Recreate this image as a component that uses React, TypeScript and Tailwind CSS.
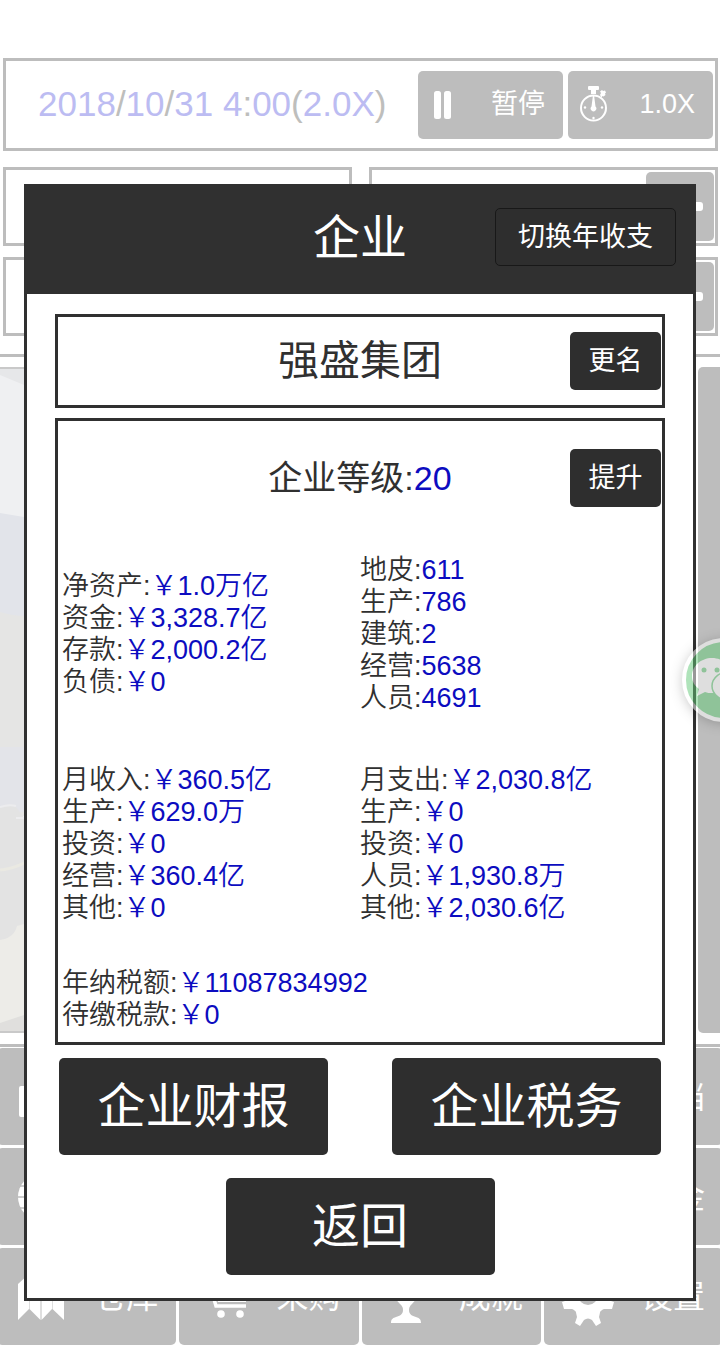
import type { ReactNode } from 'react';

interface StatLine {
  label: string;
  value: string;
}

const ASSETS: StatLine[] = [
  { label: '净资产', value: '¥1.0万亿' },
  { label: '资金', value: '¥3,328.7亿' },
  { label: '存款', value: '¥2,000.2亿' },
  { label: '负债', value: '¥0' },
];

const HOLDINGS: StatLine[] = [
  { label: '地皮', value: '611' },
  { label: '生产', value: '786' },
  { label: '建筑', value: '2' },
  { label: '经营', value: '5638' },
  { label: '人员', value: '4691' },
];

const INCOME: StatLine[] = [
  { label: '月收入', value: '¥360.5亿' },
  { label: '生产', value: '¥629.0万' },
  { label: '投资', value: '¥0' },
  { label: '经营', value: '¥360.4亿' },
  { label: '其他', value: '¥0' },
];

const EXPENSES: StatLine[] = [
  { label: '月支出', value: '¥2,030.8亿' },
  { label: '生产', value: '¥0' },
  { label: '投资', value: '¥0' },
  { label: '人员', value: '¥1,930.8万' },
  { label: '其他', value: '¥2,030.6亿' },
];

const TAXES: StatLine[] = [
  { label: '年纳税额', value: '¥11087834992' },
  { label: '待缴税款', value: '¥0' },
];

function StatList({ lines }: { lines: StatLine[] }) {
  return (
    <ul className="text-[27px] leading-8 font-[350] whitespace-nowrap">
      {lines.map((line) => (
        <li key={line.label}>
          {line.label}:<span className="text-[#0c0cc0]">{line.value.replace('¥', '￥')}</span>
        </li>
      ))}
    </ul>
  );
}

function SmallButton({ children }: { children: ReactNode }) {
  return (
    <button className="justify-self-end w-[91px] h-[58px] rounded-[5px] bg-[#2e2e2e] text-white text-[27px] leading-8">
      {children}
    </button>
  );
}

function LargeButton({ children }: { children: ReactNode }) {
  return (
    <button className="w-[269px] h-[97px] rounded-[5px] bg-[#2e2e2e] text-white text-5xl">
      {children}
    </button>
  );
}

function PauseIcon() {
  return (
    <svg viewBox="0 0 27 37" className="w-[27px] h-[37px]" fill="currentColor">
      <rect x="4" y="5" width="7" height="28" rx="2.500" />
      <rect x="14" y="5" width="7" height="28" rx="2.500" />
    </svg>
  );
}

function StopwatchIcon() {
  return (
    <svg viewBox="0 0 27 37" className="w-[27px] h-[37px]" fill="currentColor">
      <rect x="8" y="0" width="11" height="4" rx="1" />
      <rect x="11" y="3" width="5" height="5" />
      <path d="M20 9l1-2-1-1.500 2-1.500 1 1 2-.5 1 2-1 1 .5 1.500-2 1.500-1-.5-1 1.500z" />
      <circle cx="13.500" cy="22" r="12.500" fill="none" stroke="currentColor" strokeWidth="2" />
      <path d="M13 9h1l1.500 11.500a2.800 2.800 0 1 1-4 0z" />
      <circle cx="13.500" cy="32" r="1.200" />
      <circle cx="5" cy="21.500" r="1.200" />
      <circle cx="22" cy="21.500" r="1.200" />
    </svg>
  );
}

function PlusIcon() {
  return (
    <svg viewBox="0 0 46 46" className="w-[46px] h-[46px]" fill="currentColor">
      <rect x="0" y="18" width="46" height="9" rx="3" />
      <rect x="19" y="0" width="9" height="46" rx="3" />
    </svg>
  );
}

function BuildingIcon() {
  return (
    <svg viewBox="0 0 46 46" className="w-[46px] h-[46px] shrink-0" fill="currentColor">
      <rect x="1" y="12" width="44" height="31" rx="2" />
    </svg>
  );
}

function BallIcon() {
  return (
    <svg viewBox="0 0 46 46" className="w-[46px] h-[46px] shrink-0">
      <ellipse cx="22" cy="23" rx="22" ry="23" fill="currentColor" />
      <path d="M0 23h46M2 12h42M2 34h42M23 0v46" fill="none" stroke="#bdbdbd" strokeWidth="1.500" />
    </svg>
  );
}

function MapIcon() {
  return (
    <svg viewBox="0 0 46 46" className="w-[46px] h-[46px] shrink-0" fill="currentColor">
      <path d="M0 10L11 0v35L0 46z" />
      <path d="M11.500 0L22.500 10v36L11.500 35z" />
      <path d="M23.500 10L34 0v35L23.500 46z" />
      <path d="M34.500 0L46 10v36L34.500 35z" />
    </svg>
  );
}

function CartIcon() {
  return (
    <svg viewBox="0 0 46 46" className="w-[46px] h-[46px] shrink-0">
      <path d="M1 8h8l7 24h31" fill="none" stroke="currentColor" strokeWidth="3.500" />
      <path d="M13 11h33v17H18z" fill="currentColor" />
      <circle cx="21" cy="40" r="3.800" fill="currentColor" />
      <circle cx="40" cy="40" r="3.800" fill="currentColor" />
    </svg>
  );
}

function TrophyIcon() {
  return (
    <svg viewBox="0 0 46 54" className="w-[46px] h-[54px] shrink-0" fill="currentColor">
      <path d="M9 2h28v14c0 8-3 13-8 18-2 2-3 3-3 6 0 4 3 6 7 7 3 1 5 2 5 6H8c0-4 2-5 5-6 4-1 7-3 7-7 0-3-1-4-3-6-5-5-8-10-8-18z" />
    </svg>
  );
}

function GearIcon() {
  return (
    <svg viewBox="0 0 52 58" className="w-[52px] h-[58px] shrink-0">
      <g fill="currentColor">
        <circle cx="26" cy="29" r="19" />
        <path d="M18 12l-4-9 6-3 5 6h2l5-6 6 3-4 9zM10 23l-9-3 2-7 8 1 5-5 4 6zM42 23l9-3-2-7-8 1-5-5-4 6zM12 30L0 34l2 7h8l7 3zM40 30l12 4-2 7h-8l-7 3zM13 40l2 9-2 6 5 3 4-6q4-3 8 0l4 6 5-3-2-6 2-9z" />
      </g>
      <circle cx="26" cy="27" r="10" fill="#bdbdbd" />
    </svg>
  );
}

interface MenuItem {
  icon?: ReactNode;
  text?: string;
}

// Cells covered by the dialog stay blank
const MENU: MenuItem[] = [
  { icon: <BuildingIcon /> },
  {},
  {},
  { text: '存档' },
  { icon: <BallIcon /> },
  {},
  {},
  { text: '基金' },
  { icon: <MapIcon />, text: '仓库' },
  { icon: <CartIcon />, text: '采购' },
  { icon: <TrophyIcon />, text: '成就' },
  { icon: <GearIcon />, text: '设置' },
];

function ResourceBox({ hasButton = false }: { hasButton?: boolean }) {
  return (
    <div className="h-[79px] pr-px border-3 border-[#bdbdbd] flex items-center justify-end">
      {hasButton && (
        <button aria-label="增加" className="w-[68px] h-[69px] rounded-[5px] bg-[#bdbdbd] text-white flex items-center justify-center">
          <PlusIcon />
        </button>
      )}
    </div>
  );
}

function Landscape() {
  return (
    <svg viewBox="0 0 24 666" preserveAspectRatio="none" className="w-6 h-full">
      <rect width="24" height="666" fill="#eff0f2" />
      <path d="M0 0h24v18L0 8z" fill="#e6e7e9" />
      <path d="M0 146l24 4v110H0z" fill="#e2e4ea" />
      <path d="M0 245q14 4 24 4v200H0z" fill="#e5e5e4" />
      <path d="M0 380h24v65H0z" fill="#e3e4e9" />
      <path d="M0 441q10-4 16-1l8 11v130H0z" fill="#e3e3e3" />
      <path d="M0 440q9-3 16-1M16 451h8" fill="none" stroke="#ececee" strokeWidth="2" />
      <path d="M0 503q12-1 24-7" fill="none" stroke="#eae9e2" strokeWidth="3" />
      <path d="M0 573q14-2 17-14l7-2v109H0z" fill="#edece8" />
      <path d="M0 656l24-8v18H0z" fill="#e0dfdd" />
      <path d="M0 1h24M0 665h24" stroke="#c9c9c9" strokeWidth="2" />
    </svg>
  );
}

function GameBackground() {
  return (
    <div className="pt-[58px] pb-[7px]">
      <div className="mx-[3px] mr-[2px] h-[93px] pl-8 pr-[2px] border-3 border-[#bdbdbd] flex items-center justify-between">
        <time className="text-[35px] text-[#bcbcf2] whitespace-nowrap">
          2018<span className="text-[#bebebc]">/</span>10<span className="text-[#bebebc]">/</span>31 4
          <span className="text-[#bebebc]">:</span>00<span className="text-[#bebebc]">(</span>2.0X
          <span className="text-[#bebebc]">)</span>
        </time>
        <div className="flex gap-[5px] text-white text-[27px]">
          <button className="w-[145px] h-[68px] pl-3 pr-[18px] rounded-[5px] bg-[#bdbdbd] flex items-center justify-between">
            <PauseIcon />
            暂停
          </button>
          <button className="w-[145px] h-[68px] pl-3 pr-[18px] rounded-[5px] bg-[#bdbdbd] flex items-center justify-between">
            <StopwatchIcon />
            1.0X
          </button>
        </div>
      </div>
      <div className="mt-4 ml-[3px] mr-[2px] grid grid-cols-2 gap-x-[17px] gap-y-[11px]">
        <ResourceBox />
        <ResourceBox hasButton />
        <ResourceBox />
        <ResourceBox hasButton />
      </div>
      <div className="mt-[18px] h-[693px] pt-[10px] pb-[11px] border-y-3 border-[#bdbdbd] flex justify-between">
        <Landscape />
        <div className="w-[22px] rounded-l-[5px] bg-[#bdbdbd]" />
      </div>
      <div className="mt-px -mx-[3px] grid grid-cols-4 gap-[3px]">
        {MENU.map((item, index) => (
          <button
            key={index}
            tabIndex={-1}
            className="h-[97px] pl-[21px] pr-[18px] rounded-[5px] bg-[#bdbdbd] text-white text-[32px] flex items-center justify-between"
          >
            <span className="w-[46px] flex justify-center">{item.icon}</span>
            {item.text && <span className="whitespace-nowrap">{item.text}</span>}
          </button>
        ))}
      </div>
    </div>
  );
}

function CompanyDialog() {
  return (
    <section role="dialog" aria-label="企业" className="border-3 border-[#303030] bg-white text-[#303030]">
      <header className="h-[107px] px-[17px] pb-[7px] grid grid-cols-[1fr_auto_1fr] items-center bg-[#303030] text-white">
        <h1 className="col-start-2 text-[47px] leading-none">企业</h1>
        <button className="justify-self-end w-[181px] h-[58px] rounded-[5px] border border-[#181818] bg-[#2e2e2e] text-[27px] whitespace-nowrap">
          切换年收支
        </button>
      </header>

      <div className="px-7 pt-5 pb-[23px]">
        <div className="h-[94px] px-px border-3 border-[#303030] grid grid-cols-[1fr_auto_1fr] items-center">
          <h2 className="col-start-2 text-[41px] leading-none">强盛集团</h2>
          <SmallButton>更名</SmallButton>
        </div>

        <div className="mt-[10px] pt-7 pb-[11px] border-3 border-[#303030]">
          <div className="px-px grid grid-cols-[1fr_auto_1fr] items-center">
            <p className="col-start-2 text-[34px] leading-10">
              企业等级:<span className="text-[#0c0cc0]">20</span>
            </p>
            <SmallButton>提升</SmallButton>
          </div>
          <div className="mt-[47px] px-1 grid grid-cols-2 items-center gap-y-[50px]">
            <StatList lines={ASSETS} />
            <StatList lines={HOLDINGS} />
            <StatList lines={INCOME} />
            <StatList lines={EXPENSES} />
          </div>
          <div className="mt-[43px] px-1">
            <StatList lines={TAXES} />
          </div>
        </div>

        <div className="mt-[13px] px-1 flex justify-between">
          <LargeButton>企业财报</LargeButton>
          <LargeButton>企业税务</LargeButton>
        </div>
        <div className="mt-[23px] flex justify-center">
          <LargeButton>返回</LargeButton>
        </div>
      </div>
    </section>
  );
}

function ChatBubble() {
  return (
    <button
      aria-label="微信"
      className="absolute top-[638px] -right-[46px] w-[84px] h-[84px] rounded-full border-4 border-white bg-[#62c977] opacity-50 shadow-[0_2px_12px_rgba(0,0,0,0.4)]"
    >
      <svg viewBox="0 0 76 76" className="w-full h-full">
        <path d="M26 16c-11 0-20 8-20 18 0 6 3 10 7 13l-2 7 8-4c2 1 5 1 7 1 11 0 20-7 20-17s-9-18-20-18z" fill="#fff" />
        <circle cx="18" cy="28" r="2.500" fill="#62c977" />
        <circle cx="31" cy="28" r="2.500" fill="#62c977" />
        <ellipse cx="45" cy="44" rx="19" ry="15" fill="#fff" stroke="#62c977" strokeWidth="1.500" />
      </svg>
    </button>
  );
}

export default function App() {
  return (
    <main className="relative overflow-hidden bg-white font-['Liberation_Sans','Noto_Sans_CJK_SC',sans-serif]">
      <GameBackground />
      <div className="absolute inset-x-0 top-[184px] px-6">
        <CompanyDialog />
      </div>
      <ChatBubble />
    </main>
  );
}
